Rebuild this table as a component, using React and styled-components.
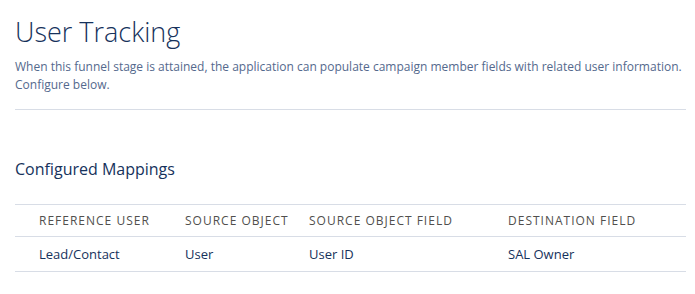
import React from "react";
import styled, { createGlobalStyle } from "styled-components";

const GlobalStyle = createGlobalStyle`
  body {
    margin: 0;
    background: #ffffff;
    font-family: "Open Sans", "Liberation Sans", sans-serif;
  }
`;

const Page = styled.div`
  padding: 12px 9px 0 15px;
`;

const Title = styled.h1`
  margin: 0;
  font-size: 27px;
  line-height: 40px;
  font-weight: 300;
  color: #16325c;
`;

const Description = styled.p`
  margin: 6px 0 0;
  font-size: 12px;
  line-height: 18px;
  color: #54698d;
`;

const Divider = styled.hr`
  margin: 15px 0 0;
  border: 0;
  border-top: 1px solid #d8dde6;
`;

const SectionTitle = styled.h2`
  margin: 48px 0 0;
  font-size: 16px;
  line-height: 22px;
  font-weight: 400;
  color: #16325c;
`;

const Table = styled.table`
  width: 100%;
  margin-top: 24px;
  border-collapse: collapse;
  table-layout: fixed;
`;

const HeadCell = styled.th`
  box-sizing: border-box;
  width: ${(p) => p.$width}px;
  padding: 0 8px 0 ${(p) => (p.$first ? 24 : 8)}px;
  height: 32px;
  text-align: left;
  font-size: 12px;
  font-weight: 400;
  letter-spacing: 1px;
  text-transform: uppercase;
  white-space: nowrap;
  color: #514f4d;
  border-top: 1px solid #d8dde6;
  border-bottom: 1px solid #d8dde6;
`;

const Cell = styled.td`
  box-sizing: border-box;
  padding: 0 8px 0 ${(p) => (p.$first ? 24 : 8)}px;
  height: 35px;
  font-size: 13px;
  color: #16325c;
  border-bottom: 1px solid #d8dde6;
`;

const columns = [
  { label: "Reference User", width: 162 },
  { label: "Source Object", width: 124 },
  { label: "Source Object Field", width: 199 },
  { label: "Destination Field", width: 186 },
];

const mappings = [
  {
    id: 1,
    reference: "Lead/Contact",
    object: "User",
    field: "User ID",
    destination: "SAL Owner",
  },
];

function App() {
  return (
    <Page>
      <GlobalStyle />
      <Title>User Tracking</Title>
      <Description>
        When this funnel stage is attained, the application can populate
        campaign member fields with related user information.
        <br />
        Configure below.
      </Description>
      <Divider />
      <SectionTitle>Configured Mappings</SectionTitle>
      <Table>
        <thead>
          <tr>
            {columns.map((col, i) => (
              <HeadCell key={col.label} $width={col.width} $first={i === 0}>
                {col.label}
              </HeadCell>
            ))}
          </tr>
        </thead>
        <tbody>
          {mappings.map((m) => (
            <tr key={m.id}>
              <Cell $first>{m.reference}</Cell>
              <Cell>{m.object}</Cell>
              <Cell>{m.field}</Cell>
              <Cell>{m.destination}</Cell>
            </tr>
          ))}
        </tbody>
      </Table>
    </Page>
  );
}

export default App;
